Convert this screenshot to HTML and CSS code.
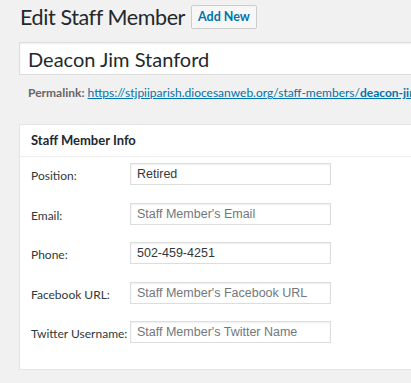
FILE: index.html
```html
<!DOCTYPE html>
<html lang="en">
<head>
    <meta charset="UTF-8">
    <meta name="viewport" content="width=device-width, initial-scale=1.0">
    <title>Edit Staff Member</title>
    <link rel="stylesheet" href="styles.css">
</head>
<body>
    <div class="wrap">
        <div class="heading">
            <h1>Edit Staff Member</h1>
            <a href="#" class="page-title-action">Add New</a>
        </div>

        <div class="title-field">
            <input type="text" id="title" value="Deacon Jim Stanford">
        </div>

        <div class="permalink">
            <strong>Permalink:</strong>
            <a href="#">https://stjpiiparish.diocesanweb.org/staff-members/<b>deacon-jim-stanford</b>/</a>
        </div>

        <div class="postbox">
            <h2 class="hndle">Staff Member Info</h2>
            <div class="inside">
                <div class="field-row">
                    <label for="position">Position:</label>
                    <input type="text" id="position" value="Retired">
                </div>
                <div class="field-row">
                    <label for="email">Email:</label>
                    <input type="text" id="email" placeholder="Staff Member's Email">
                </div>
                <div class="field-row">
                    <label for="phone">Phone:</label>
                    <input type="text" id="phone" value="502-459-4251">
                </div>
                <div class="field-row">
                    <label for="facebook">Facebook URL:</label>
                    <input type="text" id="facebook" placeholder="Staff Member's Facebook URL">
                </div>
                <div class="field-row">
                    <label for="twitter">Twitter Username:</label>
                    <input type="text" id="twitter" placeholder="Staff Member's Twitter Name">
                </div>
            </div>
        </div>
    </div>
</body>
</html>
```

FILE: styles.css
```css
body {
    margin: 0;
    background: #f1f1f1;
    color: #23282d;
    font-family: Lato, "Open Sans", sans-serif;
    font-size: 12px;
    overflow: hidden;
}
.wrap {
    width: 640px;
    padding-left: 19px;
}
.heading {
    display: flex;
    align-items: flex-start;
}
h1 {
    margin: 3px 0 0 1px;
    font-size: 21.5px;
    font-weight: 400;
    letter-spacing: -0.4px;
    line-height: 29px;
}
.page-title-action {
    margin: 5px 0 0 6px;
    padding: 0 6px;
    height: 22px;
    line-height: 22px;
    border: 1px solid #ccc;
    border-radius: 2px;
    background: #f7f7f7;
    color: #0073aa;
    font-size: 12.5px;
    font-weight: 700;
    text-decoration: none;
}
.title-field {
    margin-top: 10px;
}
.title-field input {
    width: 100%;
    height: 33px;
    padding: 0 8px;
    border: 1px solid #ddd;
    box-sizing: border-box;
    background: #fff;
    box-shadow: inset 0 1px 2px rgba(0, 0, 0, .07);
    color: #23282d;
    font-family: Lato, "Open Sans", sans-serif;
    font-size: 20px;
    outline: none;
}
.permalink {
    margin-top: 7px;
    padding-left: 9px;
    line-height: 22px;
    white-space: nowrap;
    color: #666;
}
.permalink a {
    color: #0073aa;
}
.postbox {
    margin-top: 20px;
    background: #fff;
    border: 1px solid #e5e5e5;
    box-shadow: 0 1px 1px rgba(0, 0, 0, .04);
}
.hndle {
    margin: 0;
    padding: 0 11px;
    height: 31px;
    line-height: 31px;
    border-bottom: 1px solid #eee;
    font-size: 13px;
    font-weight: 700;
}
.inside {
    padding: 6px 11px 26px;
}
.field-row {
    display: flex;
    align-items: flex-end;
    margin-bottom: 17.5px;
}
.field-row:last-child {
    margin-bottom: 0;
}
.field-row label {
    width: 99px;
    flex-shrink: 0;
    line-height: 18px;
    white-space: nowrap;
    color: #32373c;
}
.field-row input {
    width: 201px;
    height: 22px;
    padding: 0 6px;
    border: 1px solid #ddd;
    box-sizing: border-box;
    box-shadow: inset 0 1px 2px rgba(0, 0, 0, .07);
    color: #32373c;
    font-family: "Liberation Sans", Arial, sans-serif;
    font-size: 12.5px;
    outline: none;
}
.field-row input::placeholder {
    color: #72777c;
}
```
